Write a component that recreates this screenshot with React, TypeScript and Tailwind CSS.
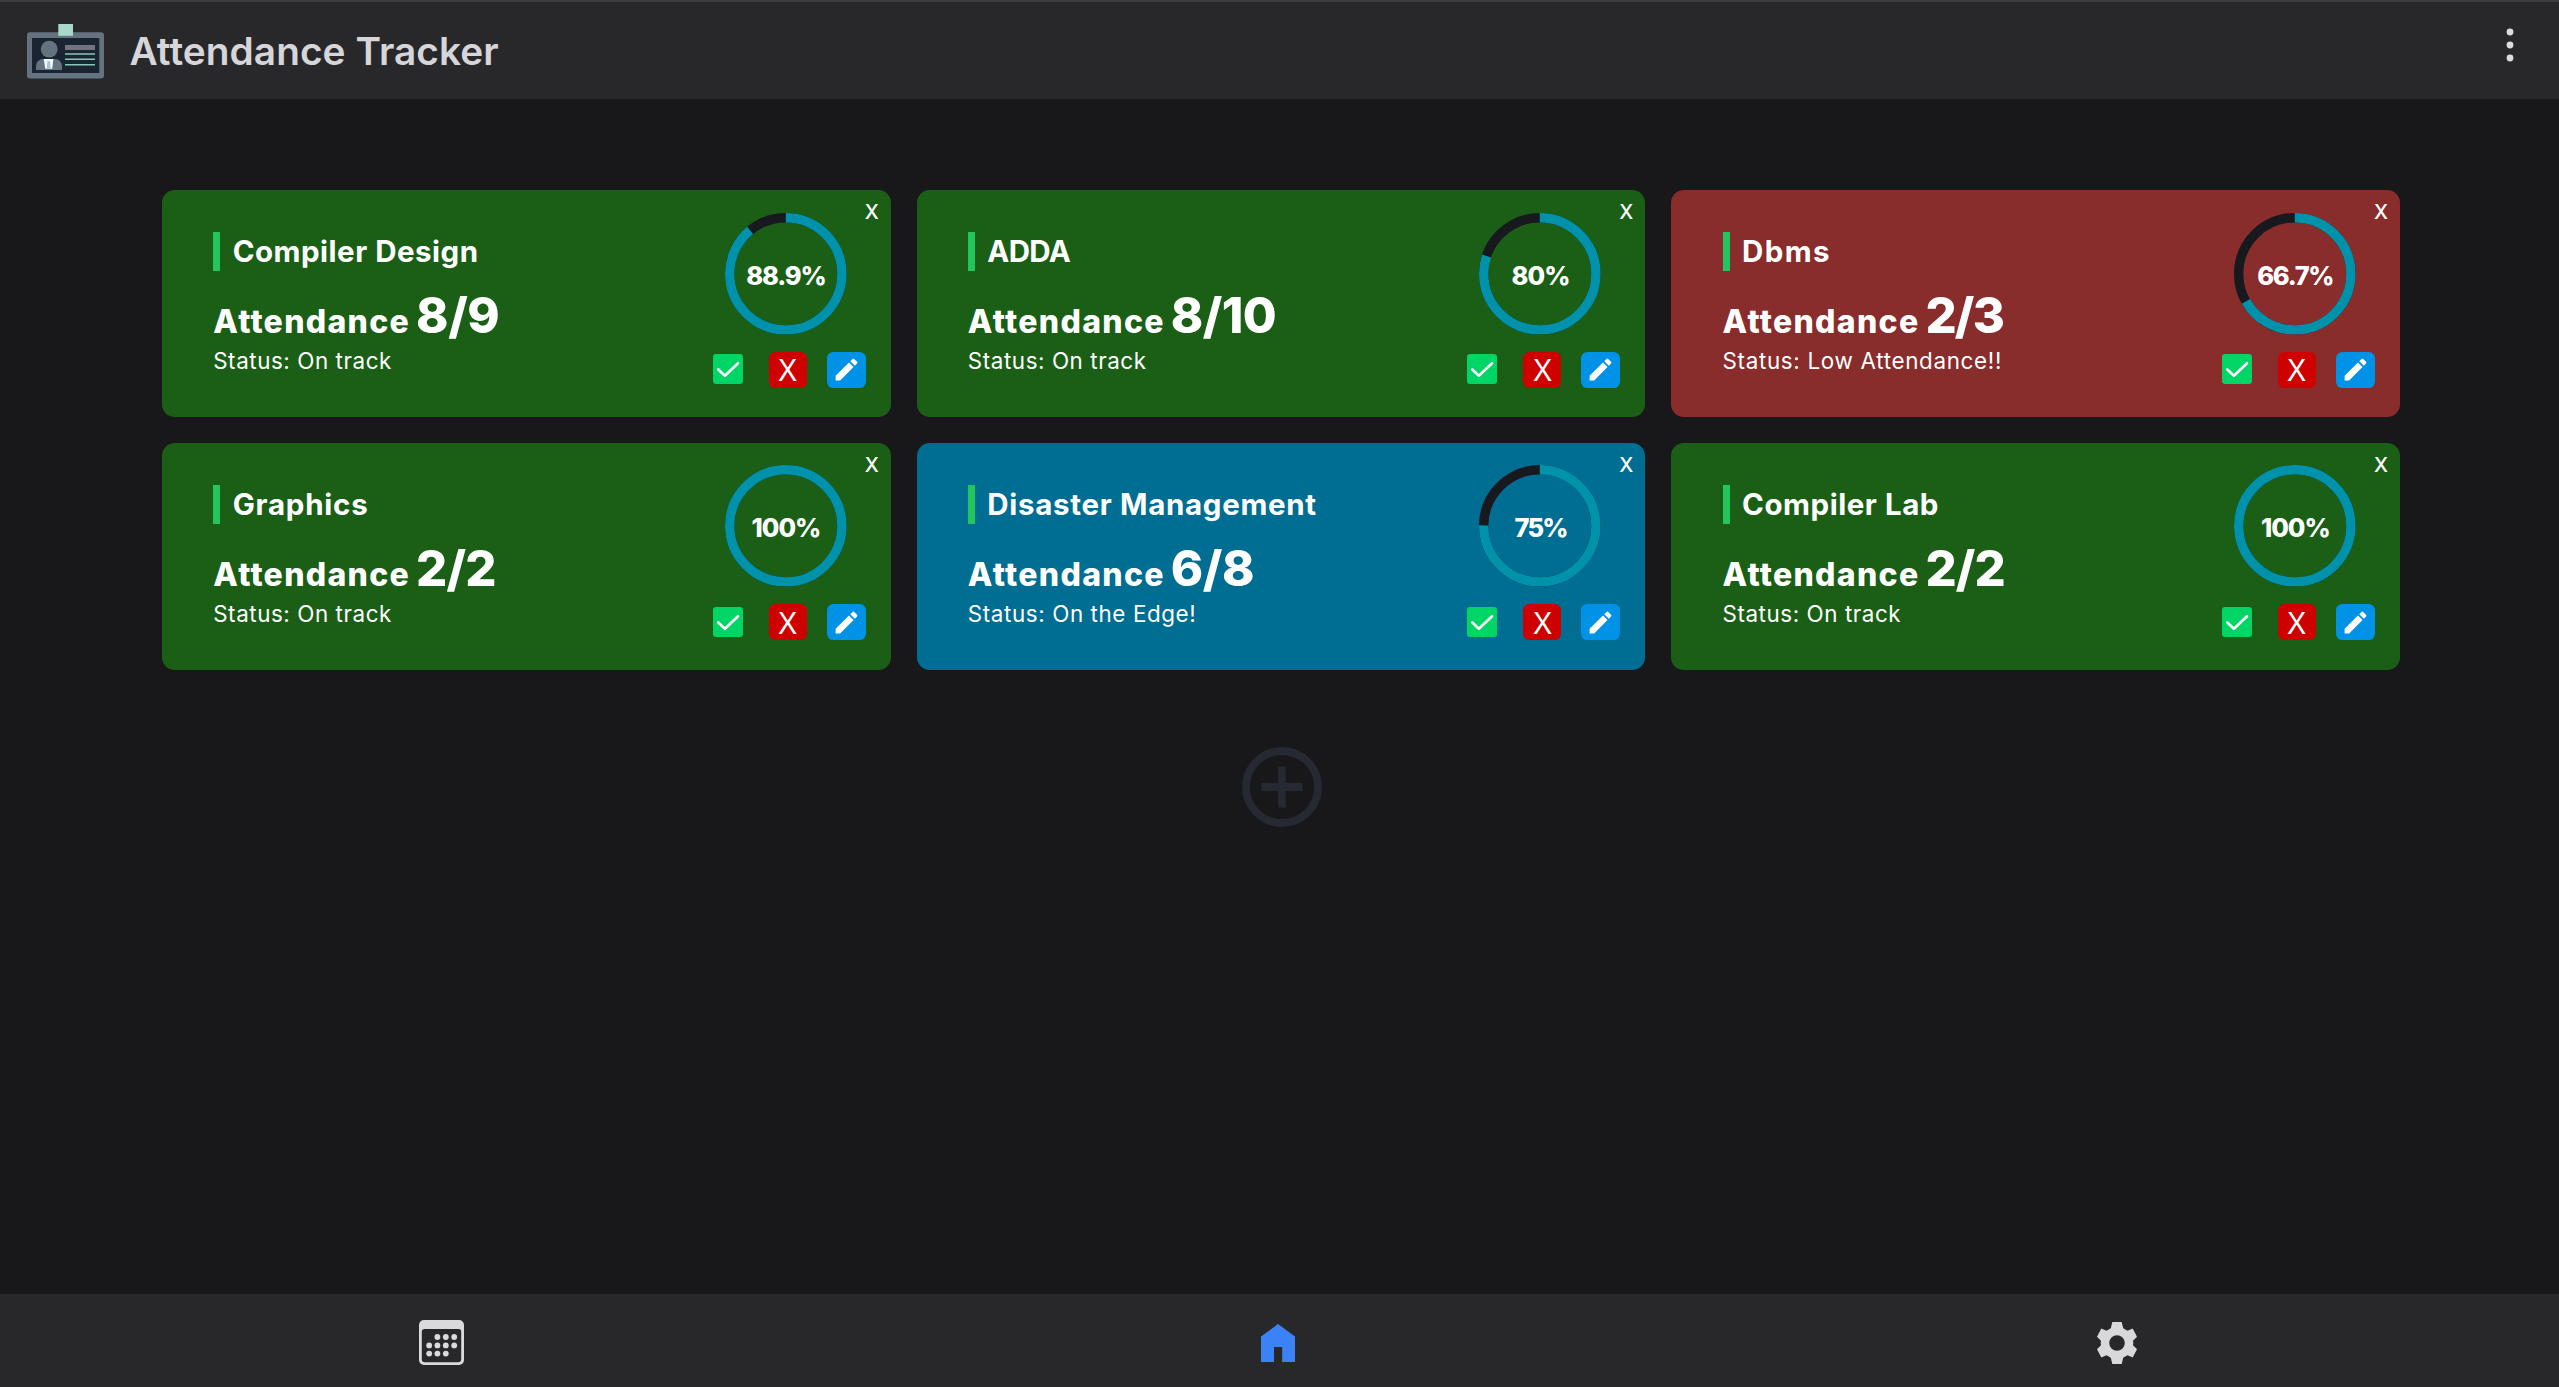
import { MdEdit, MdSettings } from "react-icons/md";

type Subject = {
  name: string;
  nameTracking: string;
  count: string;
  countTracking: string;
  status: string;
  statusTracking: string;
  percent: number;
  percentTracking: string;
  color: string;
};

const GREEN = "bg-[#1b5f17]";
const RED = "bg-[#882c2c]";
const BLUE = "bg-[#006d93]";

const subjects: Subject[] = [
  { name: "Compiler Design", nameTracking: "tracking-[0.5px]", count: "8/9", countTracking: "tracking-[-0.5px]", status: "On track", statusTracking: "tracking-[0.57px]", percent: 88.9, percentTracking: "tracking-[-1.1px]", color: GREEN },
  { name: "ADDA", nameTracking: "tracking-[-0.7px]", count: "8/10", countTracking: "tracking-[-0.6px]", status: "On track", statusTracking: "tracking-[0.57px]", percent: 80, percentTracking: "tracking-[-0.9px]", color: GREEN },
  { name: "Dbms", nameTracking: "tracking-[1.4px]", count: "2/3", countTracking: "tracking-[-1.8px]", status: "Low Attendance!!", statusTracking: "tracking-[0.68px]", percent: 66.7, percentTracking: "tracking-[-1.3px]", color: RED },
  { name: "Graphics", nameTracking: "tracking-[0.75px]", count: "2/2", countTracking: "tracking-[-0.9px]", status: "On track", statusTracking: "tracking-[0.57px]", percent: 100, percentTracking: "tracking-[-1px]", color: GREEN },
  { name: "Disaster Management", nameTracking: "tracking-[0.68px]", count: "6/8", countTracking: "tracking-[-0.4px]", status: "On the Edge!", statusTracking: "tracking-[0.6px]", percent: 75, percentTracking: "tracking-[-1.8px]", color: BLUE },
  { name: "Compiler Lab", nameTracking: "tracking-[0.55px]", count: "2/2", countTracking: "tracking-[-0.9px]", status: "On track", statusTracking: "tracking-[0.57px]", percent: 100, percentTracking: "tracking-[-1px]", color: GREEN },
];

function Logo() {
  return (
    <svg width="78" height="56" viewBox="0 0 78 56" className="shrink-0">
      <rect x="0" y="8.3" width="77" height="46.2" rx="3" fill="#657280" />
      <rect x="5" y="14" width="67.3" height="35" fill="#1b2431" />
      <rect x="31.3" y="0" width="14.7" height="11.8" fill="#a9d8ca" />
      <circle cx="22.2" cy="25.2" r="8.4" fill="#657280" />
      <path d="M9 46V42a7 7 0 0 1 7-7h12a7 7 0 0 1 7 7v4z" fill="#657280" />
      <path d="M16.8 35h9.6l-1.2 9.8h-7z" fill="#f4f8fa" />
      <path d="M20.4 37h2.6l.6 7.8h-3.8z" fill="#a3c8cf" />
      <rect x="38" y="21" width="30" height="5" fill="#6f7482" />
      <path d="M38 30h30M38 35.3h30M38 40.8h30" stroke="#8cc4b4" strokeWidth="1.6" />
    </svg>
  );
}

function Ring({ percent, tracking }: { percent: number; tracking: string }) {
  const r = 56.1;
  const length = 2 * Math.PI * r;
  return (
    <div className="relative ml-3 flex h-[121.6px] w-[121.6px] items-center justify-center">
      <svg viewBox="0 0 121.6 121.6" className="absolute inset-0 -rotate-90">
        <circle cx="60.8" cy="60.8" r={r} fill="none" stroke="#18181f" strokeWidth="9.4" />
        <circle
          cx="60.8"
          cy="60.8"
          r={r}
          fill="none"
          stroke="#0092ab"
          strokeWidth="9.4"
          strokeDasharray={percent === 100 ? undefined : `${(length * percent) / 100} ${length}`}
        />
      </svg>
      <span className={`relative pt-[5px] pl-px text-[25.5px] font-extrabold leading-8 ${tracking}`}>{percent}%</span>
    </div>
  );
}

function Card({ s }: { s: Subject }) {
  return (
    <article className={`relative flex h-[227px] justify-between rounded-[12.8px] pl-[51.2px] pr-[25px] text-white ${s.color}`}>
      <div className="pt-[42px]">
        <h2 className={`h-[39px] border-l-[7px] border-[#22c55e] pl-[12.5px] text-[29.5px] font-bold leading-[39px] whitespace-nowrap ${s.nameTracking}`}>
          {s.name}
        </h2>
        <p className="mt-[17px] flex h-14 items-baseline font-extrabold leading-[56px]">
          <span className="text-[32px] tracking-[1.3px]">Attendance</span>
          <span className={`ml-[6px] text-[49px] ${s.countTracking}`}>{s.count}</span>
        </p>
        <p className={`text-[22.4px] leading-[34px] whitespace-nowrap ${s.statusTracking}`}>Status: {s.status}</p>
      </div>
      <div className="w-[153px] pt-[22.6px]">
        <Ring percent={s.percent} tracking={s.percentTracking} />
        <div className="mt-[17.4px] flex items-center">
          <button className="mb-px flex size-[30px] items-center justify-center rounded-[3px] bg-[#00d566]">
            <svg width="30" height="30" viewBox="0 0 30 30" fill="none" stroke="#fff" strokeWidth="2.6" strokeLinecap="round" strokeLinejoin="round">
              <path d="M5.3 15.5 11.9 21.8 25 9.2" />
            </svg>
          </button>
          <button className="ml-[26px] flex h-9 w-[38px] items-center justify-center rounded-[6.4px] bg-[#cf0000] pt-px font-['Liberation_Sans',sans-serif] text-[32px] leading-9">
            <span className="scale-x-90">X</span>
          </button>
          <button className="ml-5 flex h-9 w-[39px] items-center justify-center rounded-[6.4px] bg-[#0092e6]">
            <MdEdit size={29} />
          </button>
        </div>
      </div>
      <button className="absolute right-[12px] top-[11px] font-['Inter',sans-serif] text-[20px] leading-[22px] font-medium">X</button>
    </article>
  );
}

export default function App() {
  return (
    <div className="flex h-[1387px] w-full flex-col overflow-hidden bg-[#18181b] font-['Inter',sans-serif]">
      <header className="flex h-[99px] shrink-0 items-start justify-between border-t-2 border-[#3c3c3f] bg-[#28282b] pl-[27px] pr-[45px]">
        <div className="flex items-start pt-[22px]">
          <Logo />
          <h1 className="ml-[24.5px] pt-[3px] text-[38.8px] font-semibold leading-[48px] tracking-[0.06px] text-[#d6d6da]">Attendance Tracker</h1>
        </div>
        <svg width="8" height="34" viewBox="0 0 8 34" fill="#dcdcdf" className="mt-[25.5px]">
          <circle cx="4" cy="4" r="3.4" />
          <circle cx="4" cy="17" r="3.4" />
          <circle cx="4" cy="30" r="3.4" />
        </svg>
      </header>

      <main className="flex flex-1 flex-col items-center pt-[91px]">
        <div className="ml-[3px] grid w-[2238px] grid-cols-3 gap-x-[26px] gap-y-[25.6px]">
          {subjects.map((s) => (
            <Card key={s.name} s={s} />
          ))}
        </div>
        <svg width="80" height="80" viewBox="0 0 80 80" fill="none" stroke="#262932" strokeWidth="7.8" className="ml-[4px] mt-[77.4px]">
          <circle cx="40" cy="40" r="36" />
          <path d="M40 19.5v41M19.5 40h41" />
        </svg>
      </main>

      <nav className="grid h-[93px] shrink-0 grid-cols-3 items-start justify-items-center bg-[#28282b] px-[22.5px]">
        <svg width="45" height="45" viewBox="0 0 45 45" fill="#dadadd" className="mt-[26px]">
          <path fillRule="evenodd" d="M5 0h35a5 5 0 0 1 5 5v35a5 5 0 0 1-5 5H5a5 5 0 0 1-5-5V5a5 5 0 0 1 5-5zM5.500 9A2.700 2.700 0 0 0 2.800 11.700V39.300A2.900 2.900 0 0 0 5.700 42.200H39.300A2.900 2.900 0 0 0 42.200 39.300V11.700A2.700 2.700 0 0 0 39.500 9z" />
          <g>
            {[[18.4, 17], [26.8, 17], [35.2, 17], [10.2, 25.4], [18.4, 25.4], [26.8, 25.4], [35.2, 25.4], [10.2, 33.6], [18.4, 33.6], [26.8, 33.6]].map(([x, y]) => (
              <circle key={`${x}-${y}`} cx={x} cy={y} r="2.9" />
            ))}
          </g>
        </svg>
        <svg width="34" height="38" viewBox="0 0 34 38" fill="#3b82f6" className="mr-[3px] mt-[30px]">
          <path d="M17 0 34 12.500V38H21.200V23H13V38H0V12.500z" />
        </svg>
        <svg width="42" height="42" viewBox="0 0 42 42" className="mr-[2px] mt-7" fill="#d8d8db">
          <path fillRule="evenodd" d="M16.300 0h9.400l1.500 6.300 4.300 2.500 5.200-2.200 4.300 8.200-4 4q.6 2.200 0 4.400l4 4-4.300 8.200-5.200-2.200-4.300 2.500-1.500 6.300h-9.400l-1.500-6.300-4.300-2.500-5.200 2.200L1 27.200l4-4q-.6-2.200 0-4.400l-4-4 4.300-8.200 5.200 2.200 4.300-2.500zM21 13.200a7.800 7.800 0 1 0 0 15.600a7.800 7.800 0 1 0 0-15.600z" />
        </svg>
      </nav>
    </div>
  );
}
